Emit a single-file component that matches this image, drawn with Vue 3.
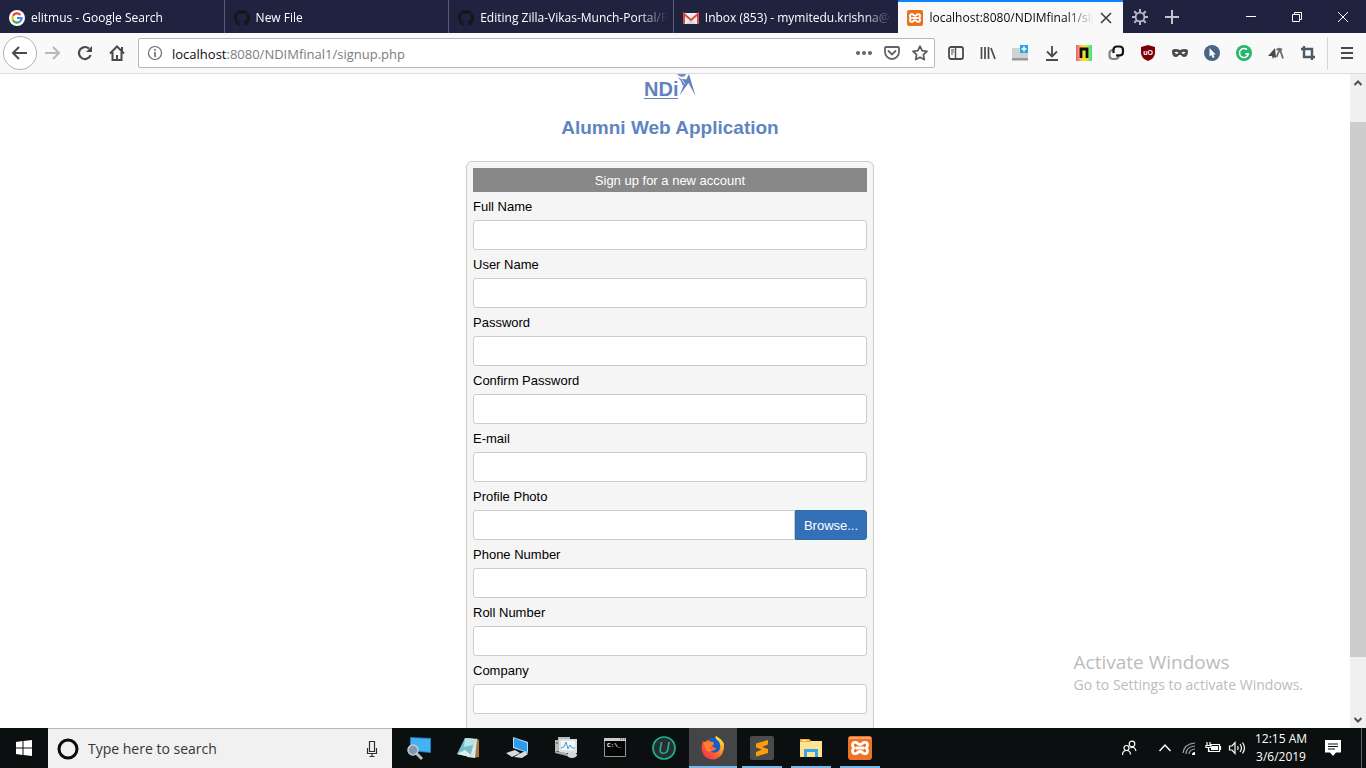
<script setup>
import { ref } from 'vue'

const search = ref('')
const tabs = [
  { icon: 'google', title: 'elitmus - Google Search' },
  { icon: 'github', title: 'New File' },
  { icon: 'github', title: 'Editing Zilla-Vikas-Munch-Portal/F' },
  { icon: 'gmail', title: 'Inbox (853) - mymitedu.krishna@g' },
  { icon: 'xampp', title: 'localhost:8080/NDIMfinal1/sign', active: true },
]
const fields = [
  { id: 'fullname', label: 'Full Name', type: 'text' },
  { id: 'username', label: 'User Name', type: 'text' },
  { id: 'password', label: 'Password', type: 'password' },
  { id: 'confirm', label: 'Confirm Password', type: 'password' },
  { id: 'email', label: 'E-mail', type: 'email' },
  { id: 'photo', label: 'Profile Photo', type: 'text', browse: true },
  { id: 'phone', label: 'Phone Number', type: 'tel' },
  { id: 'roll', label: 'Roll Number', type: 'text' },
  { id: 'company', label: 'Company', type: 'text' },
]
</script>

<template>
  <div class="screen">
    <header class="tabstrip">
      <nav class="tabs" aria-label="Tabs">
        <div v-for="(t, i) in tabs" :key="i" class="tab" :class="{ active: t.active }">
          <svg v-if="t.icon === 'google'" class="i16" viewBox="0 0 16 16">
            <circle cx="8" cy="8" r="8" fill="#fff" />
            <g fill="none" stroke-width="2.2">
              <path d="M4 5.7A4.6 4.6 0 0 1 11.4 4.9" stroke="#ea4335" />
              <path d="M4 5.7a4.6 4.6 0 0 0 0 4.6" stroke="#fbbc05" />
              <path d="M4 10.3a4.6 4.6 0 0 0 7 1.2" stroke="#34a853" />
              <path d="M8 8h4.6a4.6 4.6 0 0 1-1.6 3.5" stroke="#4285f4" />
            </g>
          </svg>
          <svg v-else-if="t.icon === 'github'" class="i16" viewBox="0 0 16 16">
            <path fill="#15161c" d="M8 0C3.58 0 0 3.58 0 8c0 3.54 2.29 6.53 5.47 7.59.4.07.55-.17.55-.38 0-.19-.01-.82-.01-1.49-2.01.37-2.53-.49-2.69-.94-.09-.23-.48-.94-.82-1.13-.28-.15-.68-.52-.01-.53.63-.01 1.08.58 1.23.82.72 1.21 1.87.87 2.33.66.07-.52.28-.87.51-1.07-1.78-.2-3.64-.89-3.64-3.95 0-.87.31-1.59.82-2.15-.08-.2-.36-1.02.08-2.12 0 0 .67-.21 2.2.82.64-.18 1.32-.27 2-.27.68 0 1.36.09 2 .27 1.53-1.04 2.2-.82 2.2-.82.44 1.1.16 1.92.08 2.12.51.56.82 1.27.82 2.15 0 3.07-1.87 3.75-3.65 3.95.29.25.54.73.54 1.48 0 1.07-.01 1.93-.01 2.2 0 .21.15.46.55.38A8.01 8.01 0 0 0 16 8c0-4.42-3.58-8-8-8z" />
          </svg>
          <svg v-else-if="t.icon === 'gmail'" class="i16" viewBox="0 0 16 16">
            <path d="M1 3h14v11H1z" fill="#eceff1" />
            <path d="M3 14 8 9l5 5z" fill="#d5d8da" />
            <path d="M1 14V4l7 6 7-6v10" fill="none" stroke="#dd4b3e" stroke-width="2" />
          </svg>
          <svg v-else class="i16" viewBox="0 0 24 24">
            <rect width="24" height="24" rx="3" fill="#e8701f" />
            <path d="M8.500 6.500q3.500 4 7 0 4-1 4 2.500 0 2-1.500 3 1.500 1 1.500 3 0 3.500-4 2.500-3.500-4-7 0-4 1-4-2.500 0-2 1.500-3-1.500-1-1.500-3 0-3.500 4-2.500zM8 12h8" fill="none" stroke="#fff" stroke-width="3" />
          </svg>
          <a href="#" class="tab-title">{{ t.title }}</a>
          <button v-if="t.active" class="plain close" aria-label="Close tab">
            <svg class="i12" viewBox="0 0 12 12"><path d="m1 1 10 10m0-10L1 11" stroke="#3f3f42" stroke-width="1.600" /></svg>
          </button>
        </div>
      </nav>
      <button class="plain strip-btn" aria-label="Extension settings">
        <svg class="i16" viewBox="0 0 16 16"><g fill="none" stroke="#b9bac6"><circle cx="8" cy="8" r="4.400" stroke-width="1.800" /><path stroke-width="2" d="M8 0v3M8 13v3M0 8h3M13 8h3M2.300 2.300l2.200 2.200M11.500 11.500l2.200 2.200M2.300 13.700l2.200-2.200M11.500 4.500l2.200-2.200" /></g></svg>
      </button>
      <button class="plain strip-btn" aria-label="New tab">
        <svg class="i16" viewBox="0 0 16 16"><path d="M7 1v14M0 8h14" stroke="#c4c5cf" stroke-width="2" /></svg>
      </button>
      <div class="window-btns">
        <button class="plain" aria-label="Minimize"><svg class="i12" viewBox="0 0 12 12"><path d="M1 5.500h10" stroke="#fff" /></svg></button>
        <button class="plain" aria-label="Restore"><svg class="i12" viewBox="0 0 12 12"><path d="M1.500 3.500h7v7h-7zM3.500 3.500v-2h7v7h-2" fill="none" stroke="#fff" /></svg></button>
        <button class="plain" aria-label="Close"><svg class="i12" viewBox="0 0 12 12"><path d="m1 1 10 10m0-10L1 11" stroke="#fff" /></svg></button>
      </div>
    </header>

    <div class="navbar">
      <button class="plain back" aria-label="Back"><svg class="i18" viewBox="0 0 18 18"><path d="M16 9H2m6-6L2 9l6 6" fill="none" stroke="#4a4a4c" stroke-width="2" /></svg></button>
      <button class="plain nb" aria-label="Forward"><svg class="i16" viewBox="0 0 16 16"><path d="M0 8h14M8 2l6 6-6 6" fill="none" stroke="#b8b8ba" stroke-width="2" /></svg></button>
      <button class="plain nb" aria-label="Reload"><svg class="i16" viewBox="0 0 16 16"><path d="M13.600 10A6 6 0 1 1 12 3.600" fill="none" stroke="#4a4a4c" stroke-width="2.200" /><path d="M15 1v6H9z" fill="#4a4a4c" /></svg></button>
      <button class="plain nb" aria-label="Home"><svg class="i16" viewBox="0 0 16 16"><path d="M1 8.500 8 1.500l7 7M3.500 7v8h9V7" fill="none" stroke="#4a4a4c" stroke-width="2" /><path d="M7 10h2v5H7zM12 2h2v4h-2z" fill="#4a4a4c" /></svg></button>
      <div class="urlbar">
        <svg class="i16" viewBox="0 0 16 16"><circle cx="8" cy="8" r="6.500" fill="none" stroke="#69696b" stroke-width="1.200" /><path d="M7.200 7h1.600v5H7.200zM7.200 4h1.600v1.700H7.200z" fill="#69696b" /></svg>
        <a class="url" href="#"><span class="host">localhost</span>:8080/NDIMfinal1/signup.php</a>
        <button class="plain" aria-label="Page actions"><svg class="i16" viewBox="0 0 16 16"><g fill="#626264"><circle cx="2" cy="8" r="2" /><circle cx="8" cy="8" r="2" /><circle cx="14" cy="8" r="2" /></g></svg></button>
        <button class="plain" aria-label="Save to Pocket"><svg class="i16" viewBox="0 0 16 16"><path d="M2 2h12q1 0 1 1v4a7 7 0 0 1-14 0V3q0-1 1-1zM4.500 6 8 9.500 11.500 6" fill="none" stroke="#626264" stroke-width="1.800" stroke-linecap="round" /></svg></button>
        <button class="plain" aria-label="Bookmark"><svg class="i16" viewBox="0 0 16 16"><path d="m8 1.200 2.100 4.500 4.900.6-3.600 3.400.9 4.900L8 12.200l-4.300 2.400.9-4.900L1 6.300l4.900-.6z" fill="none" stroke="#5b5b5d" stroke-width="1.700" stroke-linejoin="round" /></svg></button>
      </div>
      <div class="extensions">
        <button class="plain nb" aria-label="Sidebars"><svg class="i16" viewBox="0 0 16 16"><rect x="1" y="2" width="14" height="12" rx="2" fill="none" stroke="#4a4a4c" stroke-width="1.800" /><path d="M7.500 2v12" stroke="#4a4a4c" stroke-width="1.400" /><path d="M3 5h3M3 7h3M3 9h2" stroke="#4a4a4c" /></svg></button>
        <button class="plain nb" aria-label="Library"><svg class="i16" viewBox="0 0 16 16"><path d="M1.500 2v12M5 2v12M8.500 2v12M11 3l4 11" stroke="#4a4a4c" stroke-width="1.700" fill="none" /></svg></button>
        <button class="plain nb" aria-label="Add note"><svg class="i16" viewBox="0 0 16 16"><path d="M0 3h16v10H0z" fill="#d0d2d5" /><path d="M0 13h16v2.500H0z" fill="#97999c" /><path d="M8 0h8v8H8z" fill="#28a9e5" /><path d="M12 1.500v5M9.500 4h5" stroke="#fff" stroke-width="1.500" /></svg></button>
        <button class="plain nb" aria-label="Downloads"><svg class="i16" viewBox="0 0 16 16"><path d="M8 1v10M3 6.500l5 5 5-5M2 15h12" fill="none" stroke="#4a4a4c" stroke-width="1.800" /></svg></button>
        <button class="plain nb" aria-label="Nimbus">
          <svg class="i16" viewBox="0 0 16 16"><defs><linearGradient id="rainbow"><stop stop-color="#f54f94" /><stop offset=".3" stop-color="#ffc44a" /><stop offset=".6" stop-color="#e6ed2d" /><stop offset="1" stop-color="#3de091" /></linearGradient></defs><path d="M0 0h16v16H0z" fill="url(#rainbow)" /><path d="M5 13V4h6v9" fill="none" stroke="#101010" stroke-width="2.800" /></svg>
        </button>
        <button class="plain nb" aria-label="Link tool"><svg class="i16" viewBox="0 0 16 16"><g fill="none" stroke-width="2.200"><path d="M6 5H5Q1.500 5 1.500 8.500v2Q1.500 14 5 14h2q3.500 0 3.500-3.500V9" stroke="#858587" /><path d="M5.500 8V5Q5.500 1.500 9 1.500h2.500Q15 1.500 15 5v2q0 3.500-3.500 3.500H8" stroke="#151516" /></g></svg></button>
        <button class="plain nb" aria-label="uBlock"><svg class="i16" viewBox="0 0 16 16"><path d="m8 0 7 2v6q0 5-7 8-7-3-7-8V2z" fill="#800008" /><text x="8" y="10" text-anchor="middle" class="shield-text">uO</text></svg></button>
        <button class="plain nb" aria-label="Private mask"><svg class="i16" viewBox="0 0 16 16"><path d="M0 6q0-2 3-2 3 0 5 1 2-1 5-1 3 0 3 2 0 6-4 6-2 0-3-2H7q-1 2-3 2-4 0-4-6z" fill="#4a4a4c" /><path d="M2.500 7.500q2-1.500 4 .5-2 2-4-.5zM9.500 8q2-2 4-.5-2 2.500-4 .5z" fill="#f9f9fa" /></svg></button>
        <button class="plain nb" aria-label="Pointer"><svg class="i16" viewBox="0 0 16 16"><circle cx="8" cy="8" r="8" fill="#4c6584" /><path d="M5.500 3v8.500L7.500 10l1.200 3 1.800-.7L9.300 9.500h2.500z" fill="#fff" /></svg></button>
        <button class="plain nb" aria-label="Grammar"><svg class="i16" viewBox="0 0 16 16"><circle cx="8" cy="8" r="8" fill="#27b66e" /><path d="M11 4.700a4.500 4.500 0 1 0 1.400 4H9.200" fill="none" stroke="#fff" stroke-width="1.600" /></svg></button>
        <button class="plain nb" aria-label="Text tool"><svg class="i16" viewBox="0 0 16 16"><path d="m0 11 7-8 1 10-2-1-1 2-1-3z" fill="#4a4a4c" /><path d="M8.500 5q3-2.500 5.500 0M12 4.500l3 9M8.500 12l3-7" fill="none" stroke="#6a6a6c" stroke-width="1.800" /></svg></button>
        <button class="plain nb" aria-label="Crop"><svg class="i16" viewBox="0 0 16 16"><path d="M4 1v11h11M1 4h11v11" fill="none" stroke="#4c5862" stroke-width="2.400" /></svg></button>
      </div>
      <button class="plain menu" aria-label="Menu"><svg class="i12" viewBox="0 0 12 12"><path d="M0 1h12M0 6h12M0 11h12" stroke="#4a4a4c" stroke-width="1.800" /></svg></button>
    </div>

    <div class="viewport">
      <main class="page">
        <svg class="logo" viewBox="0 0 52 26" role="img" aria-label="NDiM">
          <text x="0" y="22" class="logo-text">NDi</text>
          <path d="M0 24.500h34" stroke="#6482bd" stroke-width="1.200" />
          <path d="M33 2q2 3 7 3l3 1-4 6q-2-6-6-10z" fill="#6482bd" />
          <path d="M33 0h9q-1 3-4 3t-5-3z" fill="#7690c6" />
          <path d="M45 0l6.500 22-7-13-9 12.500L41 8z" fill="#6482bd" />
          <path d="m36 3 5 7" stroke="#fff" stroke-width=".8" />
        </svg>
        <h1>Alumni Web Application</h1>
        <form class="card" @submit.prevent>
          <h2>Sign up for a new account</h2>
          <div v-for="f in fields" :key="f.id" class="field">
            <label :for="f.id">{{ f.label }}</label>
            <div class="row">
              <input :id="f.id" :type="f.type" :class="{ joined: f.browse }" />
              <button v-if="f.browse" type="button" class="browse">Browse...</button>
            </div>
          </div>
        </form>
      </main>
      <aside class="watermark">
        <p class="w-title">Activate Windows</p>
        <p class="w-sub">Go to Settings to activate Windows.</p>
      </aside>
      <div class="scrollbar">
        <svg class="arrow" viewBox="0 0 16 17"><path d="M4.500 11 8 7.500l3.500 3.500" fill="none" stroke="#505050" stroke-width="2" /></svg>
        <div class="track"><div class="thumb"></div></div>
        <svg class="arrow" viewBox="0 0 16 17"><path d="M4.500 7 8 10.500 11.500 7" fill="none" stroke="#505050" stroke-width="2" /></svg>
      </div>
    </div>

    <footer class="taskbar">
      <button class="plain start" aria-label="Start"><svg class="i16" viewBox="0 0 16 16"><path d="m0 2 6.500-1v6.500H0zM7.500.9 16 0v7.500H7.500zM0 8.500h6.500V15L0 14zM7.500 8.500H16V16l-8.500-1z" fill="#fff" /></svg></button>
      <div class="search">
        <svg class="i22" viewBox="0 0 22 22"><circle cx="11" cy="11" r="9" fill="none" stroke="#0a0a0a" stroke-width="3" /></svg>
        <input v-model="search" type="text" placeholder="Type here to search" aria-label="Type here to search" />
        <button class="plain" aria-label="Voice search"><svg class="mic" viewBox="0 0 12 18"><path d="M3.500 1.500h5v10h-5zM1.500 8v5.500h9V8M6 13.500V16M3.500 16.500h5" fill="none" stroke="#303030" stroke-width="1.200" /></svg></button>
      </div>
      <div class="apps">
        <button class="plain app" aria-label="Remote desktop"><svg class="i24" viewBox="0 0 24 24"><path d="M3 1 24 2v15L3 15z" fill="#1f7fc3" /><path d="m4 2 19 1v13L4 14z" fill="#45b1ef" /><path d="m9 17 6 6" stroke="#b4bcc4" stroke-width="3" /><circle cx="6" cy="14" r="5" fill="#8098ac" stroke="#c3cdd5" stroke-width="1.500" /></svg></button>
        <button class="plain app" aria-label="Notepad"><svg class="i24" viewBox="0 0 24 24"><path d="m20 2 3 2v17l-6 1z" fill="#a17a3d" /><path d="m9 2 12 1-2 19-8-1z" fill="#dce4e6" /><path d="M9 2 19 3l-5 18-13-3z" fill="#76bfc9" /><path d="m9 2 10 1-2 6-9 2z" fill="#b9e3e6" /><path d="m1 18 8-4 6 5-1 2z" fill="#dbeff0" /></svg></button>
        <button class="plain app" aria-label="Computer"><svg class="i24" viewBox="0 0 24 24"><path d="m8 1 15 5v11L8 12z" fill="#b8dcef" /><path d="m9 2 13 5v9L9 11z" fill="#289df0" /><path d="m1 17 9-3 5 3-8 4zM14 18l6-3 3 3-6 4-8-1z" fill="#d8dadc" /></svg></button>
        <button class="plain app" aria-label="Performance monitor"><svg class="i24" viewBox="0 0 24 24"><path d="M1 4h5v11H1zM4 1h12v5H4z" fill="#b7bbbd" /><path d="M5 3h18v14H5z" fill="#dde0e1" /><path d="M7 5h14v9H7z" fill="#f6f9fa" /><path d="m7 12 3-1 2-5 2 7 2-4 2 3h3" fill="none" stroke="#409ad2" /><path d="M2 6h2v2H2z" fill="#53a548" /><ellipse cx="18" cy="19" rx="5" ry="3" fill="#d5d8da" /><path d="m1 15 12 2v3L1 17z" fill="#a5a8aa" /></svg></button>
        <button class="plain app" aria-label="Command prompt"><svg class="i24" viewBox="0 0 24 24"><path d="M1.500 3.500h21v17h-21z" fill="#050505" stroke="#939699" /><path d="M1 2h22v3H1z" fill="#c9cbcd" /><path d="M17 3h1M19 3h1M21 3h1" stroke="#555" /><text x="4" y="11" class="cmd-text">C:\_</text></svg></button>
        <button class="plain app" aria-label="Uninstaller"><svg class="i24" viewBox="0 0 24 24"><circle cx="12" cy="12" r="11" fill="#252d35" stroke="#20ae82" stroke-width="1.700" /><text x="12" y="18" text-anchor="middle" class="u-text">U</text></svg></button>
        <button class="plain app current running" aria-label="Firefox">
          <svg class="i24" viewBox="0 0 24 24"><defs><linearGradient id="fox" x1="0" y1="1" x2="1" y2="0"><stop stop-color="#f42558" /><stop offset=".45" stop-color="#ff632b" /><stop offset=".75" stop-color="#ffba22" /><stop offset="1" stop-color="#fff052" /></linearGradient></defs><path d="M2 5q1 1 2 1 2-2 4-2Q10 1 14 3q0-2 1-3 6 3 8 8 1 12-9 15.500Q3 24 1 15 0 9 2 5z" fill="url(#fox)" /><path d="M7 4q5-4 10-1 4 7 1 12-6 4-10-1 6 2 7-2-3 0-4-2 3-2 1-4-3 0-5-2z" fill="#175ccb" /><path d="M15 0q6 5 5 12-2 6-8 6 7 0 8-7 0-5-5-8z" fill="#ffdc3e" /><path d="M3 6q1 0 3 1l5 1q0 2-3 3 0 2 4 3-3 3-6 1Q3 12 3 6z" fill="#ff8131" /></svg>
        </button>
        <button class="plain app running" aria-label="Sublime Text"><svg class="i24" viewBox="0 0 24 24"><rect width="24" height="24" rx="2" fill="#4b4b4b" /><path d="M6 7.500 18 4v4.500L12 11l6 2v4L6 20.500V16l6-2.500-6-2z" fill="#ff9c0a" /></svg></button>
        <button class="plain app running" aria-label="File Explorer"><svg class="i24" viewBox="0 0 24 24"><path d="M1 3h9l2 2h11v16H1z" fill="#ffe293" /><path d="M1 3h9l2 3H1z" fill="#efad31" /><path d="M3 4h5v1H3z" fill="#fff4c7" /><path d="M5 13h14v8h-3v-5H8v5H5z" fill="#35a8e3" /></svg></button>
        <button class="plain app running" aria-label="XAMPP"><svg class="i24" viewBox="0 0 24 24"><rect width="24" height="24" rx="3" fill="#ee7124" /><path d="M1 1h22v2H1z" fill="#f6a272" /><path d="M8.500 6.500q3.500 4 7 0 4-1 4 2.500 0 2-1.500 3 1.500 1 1.500 3 0 3.500-4 2.500-3.500-4-7 0-4 1-4-2.500 0-2 1.500-3-1.500-1-1.500-3 0-3.500 4-2.500zM8 12h8" fill="none" stroke="#fff" stroke-width="2.800" /></svg></button>
      </div>
      <div class="tray">
        <button class="plain people" aria-label="People"><svg class="i16" viewBox="0 0 16 16"><g fill="none" stroke="#fff" stroke-width="1.200"><circle cx="5.500" cy="8" r="2.500" /><path d="M1.500 15q0-4.500 4-4.500t4 4" /><circle cx="11" cy="4" r="2.800" /><path d="M9.500 8q4-2.500 5.500 3" /></g></svg></button>
        <button class="plain" aria-label="Show hidden icons"><svg class="i16" viewBox="0 0 16 16"><path d="m2.500 11 5.500-6 5.500 6" fill="none" stroke="#fff" stroke-width="1.400" /></svg></button>
        <button class="plain" aria-label="Network"><svg class="i16" viewBox="0 0 16 16"><g fill="none" stroke="#a5a7a8" stroke-width="1.200"><path d="M2 13Q3 4 14 3M5 14q0-7 9-8M8 14q0-4 6-5" /></g><path d="M11 15q0-3 3-3v3z" fill="#fff" /></svg></button>
        <button class="plain" aria-label="Battery"><svg class="i16" viewBox="0 0 16 16"><path d="M5 4.500h9.500v7H4v-2M2 2v3M5 2v3M1 5.500h5v2H1zM3.500 8v3.500H5M15.500 6v4" fill="none" stroke="#fff" stroke-width="1.200" /><path d="M7 6h6v4H6V8z" fill="#fff" /></svg></button>
        <button class="plain" aria-label="Volume"><svg class="i16" viewBox="0 0 16 16"><path d="M.500 6H3l3-3.500v11L3 10H.500zM8.500 6q1.500 2 0 4M11 4q3 4 0 8M13.500 2.500q4 5.500 0 11" fill="none" stroke="#fff" stroke-width="1.200" /></svg></button>
        <div class="clock"><time>12:15 AM</time><time>3/6/2019</time></div>
        <button class="plain notice" aria-label="Notifications"><svg class="i18" viewBox="0 0 18 18"><path d="M1 1h16v12.500h-5L9 17l-3-3.500H1z" fill="#fff" /><path d="M4 5h10M4 7.500h10M4 10h7" stroke="#0c0f10" /></svg></button>
        <button class="plain desktop" aria-label="Show desktop"></button>
      </div>
    </footer>
  </div>
</template>

<style>
body { margin: 0; }
</style>

<style scoped>
* { box-sizing: border-box; }
.screen { display: flex; flex-direction: column; height: 100vh; overflow: hidden; background: #fff; font-family: "Open Sans", "Noto Sans", sans-serif; font-size: 12px; }
svg { display: block; flex: none; overflow: visible; }
.plain { display: flex; align-items: center; justify-content: center; flex: none; padding: 0; border: 0; background: none; }
.i12 { width: 12px; height: 12px; }
.i16 { width: 16px; height: 16px; }
.i18 { width: 18px; height: 18px; }
.i22 { width: 22px; height: 22px; }
.i24 { width: 24px; height: 24px; }

.tabstrip { display: flex; flex: none; height: 33px; background: #202340; }
.tabs { display: grid; grid-template-columns: repeat(5, minmax(0, 1fr)); flex: 1; min-width: 0; }
.tab { display: flex; align-items: center; gap: 6px; min-width: 0; padding: 2px 6px 0 9px; border-right: 1px solid #5b5d73; color: #fff; }
.tab:nth-last-child(2) { border-right-color: #202340; }
.tab.active { padding: 0 11px 0 9px; border-top: 2px solid #0a84ff; border-right: 0; background: #f9f9fa; color: #0c0c0d; }
.tab-title { flex: 1; min-width: 0; overflow: hidden; white-space: nowrap; color: inherit; text-decoration: none; line-height: 20px; mask-image: linear-gradient(to right, #000 calc(100% - 28px), transparent); }
.close { width: 12px; height: 20px; }
.strip-btn { width: 33px; }
.window-btns { display: flex; width: 177px; padding-left: 39px; }
.window-btns .plain { flex: 1; }

.navbar { display: flex; align-items: center; flex: none; height: 41px; padding-left: 3px; background: #f9f9fa; border-bottom: 1px solid #dcdcdd; }
.back { width: 34px; height: 34px; border: 1px solid #b1b1b3; border-radius: 50%; background: #fff; }
.nb { width: 32px; height: 32px; }
.urlbar { display: flex; align-items: center; gap: 12px; flex: 1; min-width: 0; height: 30px; margin: 0 5px; padding: 0 6px 0 8px; border: 1px solid #b7b7b9; border-radius: 2px; background: #fff; }
.url { flex: 1; min-width: 0; margin-left: -3px; padding-top: 2px; overflow: hidden; white-space: nowrap; color: #7c7c7e; text-decoration: none; font-size: 13px; line-height: 22px; }
.host { color: #0c0c0d; }
.extensions { display: flex; }
.menu { width: 39px; height: 33px; margin-left: 3px; border-left: 1px solid #d5d5d6; }
.shield-text { font: bold 7px "Liberation Sans", sans-serif; fill: #fff; }

.viewport { position: relative; display: flex; flex: 1; min-height: 0; overflow: hidden; }
.page { display: flex; flex-direction: column; align-items: center; flex: 1; padding-right: 10px; font-family: "Liberation Sans", Arial, sans-serif; }
.logo { width: 52px; height: 26px; }
.logo-text { font: bold 20px "Liberation Sans", Arial, sans-serif; fill: #6482bd; }
h1 { margin: 16px 0 21px; color: #5f84c2; font-size: 19px; line-height: 24px; }
.card { width: 408px; max-width: 100%; padding: 6px 6px 24px; border: 1px solid #ccc; border-radius: 6px; background: #f5f5f5; }
h2 { margin: 0; padding-top: 2px; background: #888; color: #fff; font-size: 13px; font-weight: 400; line-height: 22px; text-align: center; }
.field label { display: block; padding-top: 2px; color: #000; font-size: 13px; line-height: 26px; }
.row { display: flex; }
.row input { flex: 1; min-width: 0; height: 30px; padding: 4px 8px; border: 1px solid #ccc; border-radius: 3px; background: #fff; font: inherit; }
.row .joined { border-radius: 3px 0 0 3px; }
.browse { width: 72px; padding: 0; border: 1px solid #2e6da4; border-radius: 0 3px 3px 0; background: #3470b8; color: #fff; font: 13px "Liberation Sans", Arial, sans-serif; }
.watermark { position: absolute; right: 63px; bottom: 33px; color: #bcbcbc; white-space: nowrap; }
.watermark p { margin: 0; }
.w-title { font-size: 19px; line-height: 26px; }
.w-sub { font-size: 14px; line-height: 20px; }
.scrollbar { display: flex; flex-direction: column; flex: none; width: 16px; background: #f0f0f0; }
.arrow { width: 16px; height: 17px; }
.track { flex: 1; padding: 31px 0 54px; }
.thumb { height: 100%; background: #cdcdcd; }

.taskbar { display: flex; flex: none; height: 40px; background: #0c0f10; color: #fff; }
.start { width: 48px; }
.search { display: flex; align-items: center; width: 344px; padding: 0 14px 0 9px; gap: 9px; border-top: 1px solid #b8b8b8; background: #f1f1f1; }
.search input { flex: 1; min-width: 0; padding: 0; border: 0; background: none; font: 14px "Open Sans", sans-serif; outline: 0; }
.search input::placeholder { color: #363636; opacity: 1; }
.mic { width: 12px; height: 18px; }
.apps { display: flex; gap: 1px; margin-left: 3px; }
.app { position: relative; width: 48px; }
.current { background: #434546; }
.running::after { content: ""; position: absolute; right: 4px; bottom: 0; left: 4px; height: 2px; background: #76b9ed; }
.current::after { right: 0; left: 0; }
.cmd-text { font: bold 6px "Liberation Mono", monospace; fill: #fff; }
.u-text { font: italic 16px "Liberation Sans", sans-serif; fill: #25b489; }
.tray { display: flex; align-items: center; margin-left: auto; }
.tray .plain { width: 24px; height: 40px; }
.tray .people { width: 48px; }
.clock { display: flex; flex-direction: column; align-items: center; width: 64px; line-height: 18px; }
.tray .notice { width: 40px; margin-right: 8px; }
.tray .desktop { width: 5px; border-left: 1px solid #5e6061; }
</style>
